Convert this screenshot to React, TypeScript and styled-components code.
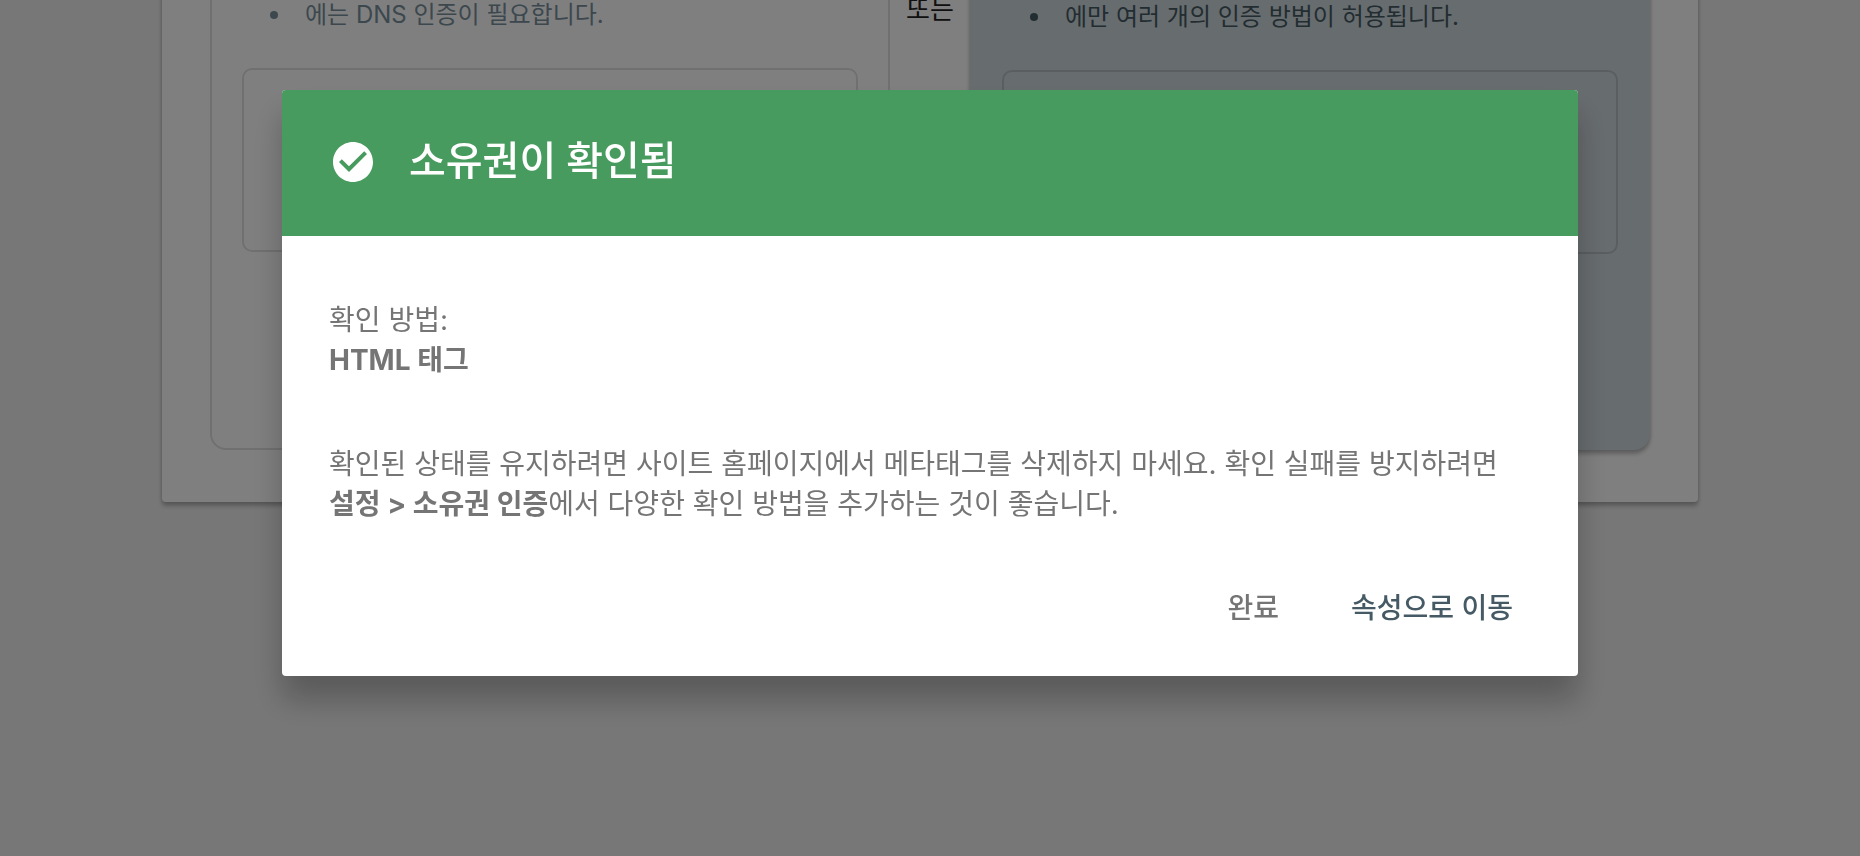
import React from "react";
import styled, { createGlobalStyle } from "styled-components";

const GlobalStyle = createGlobalStyle`
  *, *::before, *::after { box-sizing: border-box; }
  html, body { margin: 0; padding: 0; }
  body {
    background: #eeeeee;
    font-family: Inter, "Noto Sans CJK KR", sans-serif;
    word-break: keep-all;
    overflow: hidden;
  }
`;

const Page = styled.main`
  display: flex;
  justify-content: center;
  min-height: 100vh;
  align-items: flex-start;
`;

/* The card is scrolled partly out of view above the window. */
const Card = styled.section`
  display: flex;
  width: 100%;
  max-width: 1536px;
  margin-top: -40px;
  padding: 0 48px 52px;
  background: #ffffff;
  border-radius: 4px;
  box-shadow: 0 4px 4px rgba(0, 0, 0, 0.24), 0 0 4px rgba(0, 0, 0, 0.12);
`;

const Option = styled.article<{ $selected?: boolean }>`
  flex: 1;
  padding: ${(p) => (p.$selected ? "43px 32px 196px" : "39px 30px 194px")};
  border: ${(p) => (p.$selected ? "none" : "2px solid #e0e0e0")};
  border-radius: 16px;
  background: ${(p) => (p.$selected ? "#cfd8dc" : "transparent")};
  color: ${(p) => (p.$selected ? "#455a64" : "#78909c")};
  box-shadow: ${(p) =>
    p.$selected
      ? "0 4px 4px rgba(0, 0, 0, 0.24), 0 0 4px rgba(0, 0, 0, 0.12)"
      : "none"};
`;

const Notes = styled.ul`
  margin: 0 0 39px;
  padding: 0 0 0 28px;
  list-style: none;
`;

const Note = styled.li`
  display: flex;
  align-items: center;
  gap: 27px;
  font-size: 24px;
  line-height: 28px;

  &::before {
    content: "";
    width: 8px;
    height: 8px;
    border-radius: 50%;
    background: currentColor;
  }
`;

const Field = styled.div`
  height: 184px;
  border: 2px solid rgba(0, 0, 0, 0.12);
  border-radius: 10px;
`;

const Or = styled.div`
  width: 80px;
  padding-top: 40px;
  color: #212121;
  font-size: 26px;
  line-height: 20px;
  text-align: center;
`;

const Overlay = styled.div`
  position: fixed;
  inset: 0;
  display: flex;
  justify-content: center;
  align-items: flex-start;
  padding-top: 90px;
  background: rgba(0, 0, 0, 0.5);
`;

const Dialog = styled.div`
  width: 100%;
  max-width: 1296px;
  overflow: hidden;
  background: #ffffff;
  border-radius: 4px;
  box-shadow: 0 24px 30px rgba(0, 0, 0, 0.24);
`;

const Header = styled.header`
  display: flex;
  align-items: center;
  gap: 32px;
  padding: 48px 47px 50px;
  background: #489b5f;
  color: #ffffff;
`;

const Title = styled.h2`
  margin: 0;
  font-family: Roboto, "Noto Sans CJK KR", sans-serif;
  font-size: 40px;
  font-weight: 500;
  line-height: 48px;
`;

const Body = styled.div`
  display: grid;
  gap: 64px;
  padding: 64px 47px 0;
  color: #757575;
  font-size: 28px;
  line-height: 40px;
`;

const Text = styled.p`
  margin: 0;
`;

const Strong = styled.strong`
  font-weight: 700;
`;

const Actions = styled.footer`
  display: flex;
  justify-content: flex-end;
  gap: 40px;
  padding: 48px 49px 32px;
`;

const Button = styled.button<{ $primary?: boolean }>`
  height: 72px;
  padding: 0 16px;
  border: 0;
  border-radius: 4px;
  background: transparent;
  color: ${(p) => (p.$primary ? "#455a64" : "#757575")};
  font: inherit;
  font-size: 28px;
  font-weight: 500;
  line-height: 40px;
  cursor: pointer;
`;

const CheckCircle = () => (
  <svg width="48" height="48" viewBox="0 0 24 24" fill="#ffffff" aria-hidden="true">
    <path d="M12 2C6.48 2 2 6.48 2 12s4.48 10 10 10 10-4.48 10-10S17.52 2 12 2zm-2 15l-5-5 1.41-1.41L10 14.17l7.59-7.59L19 8l-9 9z" />
  </svg>
);

export default function App() {
  return (
    <>
      <GlobalStyle />
      <Page>
        <Card>
          <Option>
            <Notes>
              <Note>에는 DNS 인증이 필요합니다.</Note>
            </Notes>
            <Field />
          </Option>
          <Or>또는</Or>
          <Option $selected>
            <Notes>
              <Note>에만 여러 개의 인증 방법이 허용됩니다.</Note>
            </Notes>
            <Field />
          </Option>
        </Card>
      </Page>
      <Overlay>
        <Dialog role="dialog" aria-modal="true" aria-labelledby="dialog-title">
          <Header>
            <CheckCircle />
            <Title id="dialog-title">소유권이 확인됨</Title>
          </Header>
          <Body>
            <Text>
              확인 방법:
              <br />
              <Strong>HTML 태그</Strong>
            </Text>
            <Text>
              확인된 상태를 유지하려면 사이트 홈페이지에서 메타태그를 삭제하지 마세요. 확인 실패를 방지하려면{" "}
              <Strong>설정 &gt; 소유권 인증</Strong>에서 다양한 확인 방법을 추가하는 것이 좋습니다.
            </Text>
          </Body>
          <Actions>
            <Button type="button">완료</Button>
            <Button type="button" $primary>
              속성으로 이동
            </Button>
          </Actions>
        </Dialog>
      </Overlay>
    </>
  );
}
